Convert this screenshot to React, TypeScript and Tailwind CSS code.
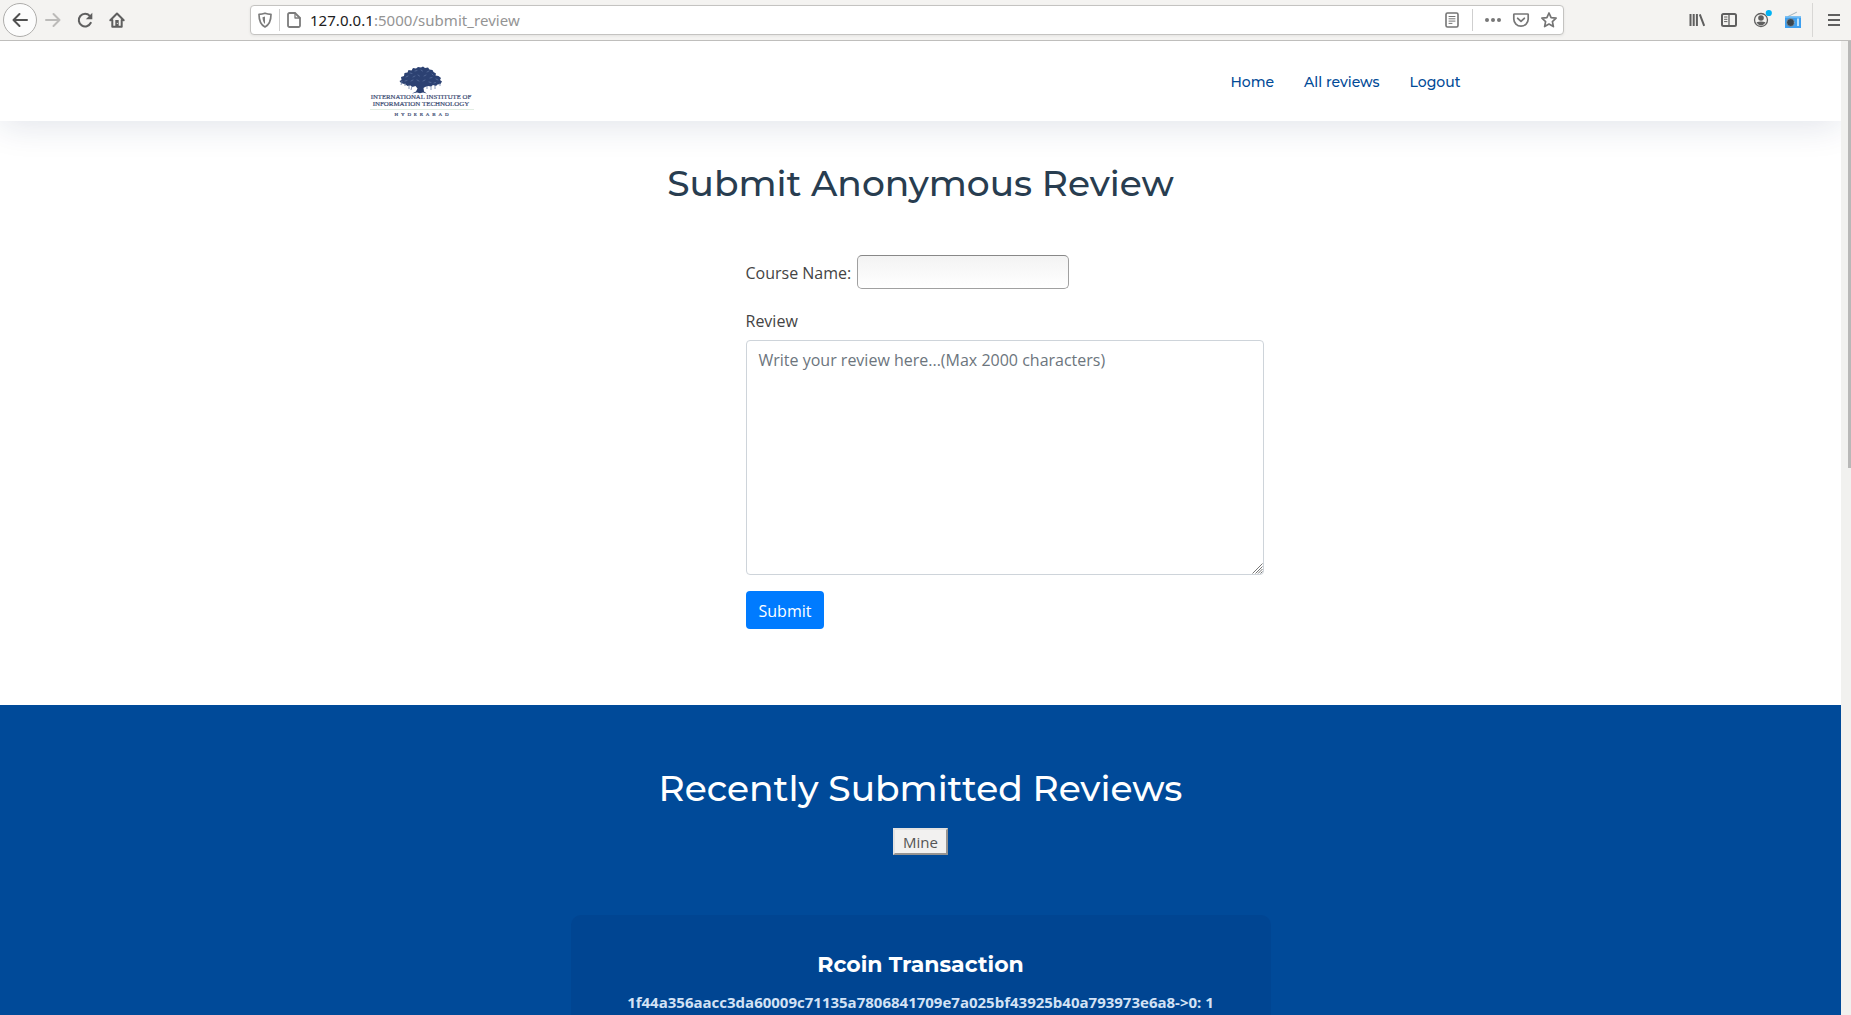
import React from "react";

type IconProps = { children: React.ReactNode; className?: string; color?: string };

function Icon({ children, className = "", color = "#5f5f5f" }: IconProps) {
  return (
    <svg viewBox="0 0 16 16" fill="none" stroke={color} strokeWidth="2" strokeLinecap="round" strokeLinejoin="round" className={`h-4 w-4 shrink-0 overflow-visible ${className}`}>
      {children}
    </svg>
  );
}

function Slot({ children }: { children: React.ReactNode }) {
  return <div className="flex h-8 w-8 shrink-0 items-center justify-center">{children}</div>;
}

function Toolbar() {
  return (
    <div className="flex h-[41px] shrink-0 items-center border-b border-[#bfbebc] bg-[#f4f3f1]">
      <div className="ml-[3px] flex h-[34px] w-[34px] shrink-0 items-center justify-center rounded-full border border-[#aeadab] bg-[#fcfcfc]">
        <Icon color="#505050"><path d="M15 8H1.5M7.5 2L1.5 8l6 6" /></Icon>
      </div>
      <Slot><Icon color="#bcbbb9"><path d="M1 8h13.5M8.5 2l6 6-6 6" /></Icon></Slot>
      <Slot>
        <Icon>
          <path d="M13.8 10.8A6.3 6.3 0 1 1 12.8 3.9" />
          <path d="M15.3 .8v6.5H8.8z" fill="#5f5f5f" stroke="none" />
        </Icon>
      </Slot>
      <Slot>
        <Icon>
          <path d="M1.3 8.3L8 1.5l6.7 6.8M3.3 8v6.7h9.4V8" />
          <path d="M6.3 8h3.4v7H6.3z" fill="#5f5f5f" stroke="none" />
          <path d="M8.3 11.3v.2" stroke="#f4f3f1" strokeWidth="1" />
        </Icon>
      </Slot>
      <div className="ml-[117px] flex h-[30px] w-[1314px] shrink-0 items-center rounded-[4px] border border-[#c4c3c1] bg-white shadow-[0_1px_3px_rgba(0,0,0,0.07)]">
        <Icon color="#7c7c7c" className="ml-[6px]">
          <path d="M8 1.2c2 .8 4 1.1 6 1.1 0 6-1.1 10.3-6 12.7C3.1 12.6 2 8.3 2 2.3c2 0 4-.3 6-1.1z" strokeWidth="1.7" />
          <path d="M8 4.5v7.5C6.2 10.4 5.6 8 5.5 5.2z" fill="#7c7c7c" stroke="none" />
        </Icon>
        <div className="ml-[6px] h-[22px] w-px bg-[#cfcfcf]" />
        <Icon color="#7c7c7c" className="ml-[6px]">
          <path d="M3.5 1H9l5 5v7.5a1.5 1.5 0 0 1-1.5 1.5h-9A1.5 1.5 0 0 1 2 13.5v-11A1.5 1.5 0 0 1 3.5 1z" strokeWidth="1.8" />
          <path d="M9 1v5h5" strokeWidth="1.3" />
        </Icon>
        <div className="ml-[8px] font-['Noto_Sans','Open_Sans',sans-serif] text-[15px] leading-5 tracking-[0.04px] text-[#949494]">
          <span className="text-[#202020]">127.0.0.1</span>:5000/submit_review
        </div>
        <div className="ml-auto flex items-center">
          <Icon color="#747474">
            <rect x="2" y="1" width="12" height="14" rx="1.5" strokeWidth="1.6" />
            <path d="M5 4.5h6M5 6.8h6M5 9.1h6M5 11.4h3" strokeWidth="1" />
          </Icon>
          <div className="ml-[12px] h-[22px] w-px bg-[#cfcfcf]" />
          <Icon color="#777" className="ml-[12px]">
            <g fill="#777" stroke="none"><circle cx="2" cy="8" r="2" /><circle cx="8" cy="8" r="2" /><circle cx="14" cy="8" r="2" /></g>
          </Icon>
          <Icon color="#777" className="ml-[12px]">
            <path d="M1.5 2h13a.7.7 0 0 1 .7.7V7A7.2 7.2 0 0 1 .8 7V2.7A.7.7 0 0 1 1.5 2z" strokeWidth="1.7" />
            <path d="M4.7 6.3L8 9.4l3.3-3.1" strokeWidth="1.8" />
          </Icon>
          <Icon color="#747474" className="ml-[12px] mr-[6px]">
            <path d="M8 1l2.1 4.6 5 .6-3.7 3.4 1 5L8 12.1l-4.4 2.5 1-5L.9 6.2l5-.6z" strokeWidth="1.7" />
          </Icon>
        </div>
      </div>
      <div className="ml-[117px] flex items-center">
        <Slot><Icon><path d="M1.5 2v12M4.7 2v12M7.9 2v12M10.8 2.3l4.4 11.5" strokeLinecap="butt" /></Icon></Slot>
        <Slot>
          <Icon>
            <rect x="1" y="2" width="14" height="12" rx="1.5" />
            <path d="M8 2v12" strokeWidth="1.3" />
            <path d="M3.5 5h2.5M3.5 7.3h2.5M3.5 9.6h2.5" strokeWidth="1" />
          </Icon>
        </Slot>
        <Slot>
          <Icon>
            <circle cx="8" cy="8" r="6.5" strokeWidth="1.3" />
            <circle cx="8" cy="6" r="2.8" fill="#5f5f5f" stroke="none" />
            <path d="M3.5 10.2Q8 8.6 12.5 10.2Q11 13.3 8 13.3T3.5 10.2z" fill="#5f5f5f" stroke="none" />
            <circle cx="15.8" cy="1" r="3.1" fill="#00b3f4" stroke="none" />
          </Icon>
        </Slot>
        <Slot>
          <Icon>
            <path d="M3 4.5L11.5 .3" stroke="#a3b4bd" strokeWidth="1" />
            <rect x="0" y="4.5" width="16" height="11.5" fill="#3d9ff0" stroke="none" />
            <path d="M0 4.5h16v1.5H0z" fill="#69b9f5" stroke="none" />
            <circle cx="5.5" cy="10.5" r="3.9" fill="#39454e" stroke="#89a9bd" strokeWidth=".7" />
            <path d="M13 6.5v7.5" stroke="#b9e2fb" strokeWidth="2" strokeLinecap="butt" />
          </Icon>
        </Slot>
        <div className="ml-[3px] h-[34px] w-px bg-[#d8d7d5]" />
        <div className="ml-[13px]"><Icon><path d="M2 3h12M2 8h12M2 13h12" strokeLinecap="butt" /></Icon></div>
      </div>
    </div>
  );
}

function Logo() {
  return (
    <svg viewBox="0 0 104 56" className="h-14 w-[104px]" role="img">
      <path
        d="M31 22l-1.5-2 2-1-.5-3 3-1 .5-3 3-.5 1-2.5 3 .5 1.5-2.5 3 .5 2-1.5 3 .5 2-1 2 1.5 3-.5 1.5 2 3 .5 1 2 2.5 1.5-.5 2 3 .5 2.5 2-1 2 2 1.5-1.5 2.5-3 .5-1.5 1.5-3-1-2 1.5-3-.5-3 1-1.5 1 .5 3.5 3 2-4-1-3 .8-3-.8-5 1 4-2 1.5-3-2-2.5-3 1-2-1.5-3 .5-2-1.5z"
        fill="#2c4172"
      />
      <path d="M32 20l-1 4M35 22v3M70 22v3M39 24v4M65 24v4M42 25l-1 4M61 25v4M57 25v3" stroke="#6a7da4" strokeWidth=".8" />
      <path d="M36 16l2-1M40 12l2 .5M45 10l2-.5M51 9l1.5 1M57 11l2-1M62 13l1 1M43 16l2-1M48 14l1.5 1M54 15l2-1M60 17l2-.5M66 18l2 1M35 20l2-.5M41 20l2-1M47 19l2 1M53 20l2-1M59 21l2 .5M64 22l1.5-.5" stroke="#5f74a0" strokeWidth=".7" strokeLinecap="round" />
      <g fill="#3a4a72" className="font-['Liberation_Serif',serif]" stroke="#3a4a72" strokeWidth=".2">
        <text x="0.7" y="38.3" fontSize="7" textLength="100.5" lengthAdjust="spacingAndGlyphs">INTERNATIONAL INSTITUTE OF</text>
        <text x="2.7" y="45.3" fontSize="7" textLength="96.5" lengthAdjust="spacingAndGlyphs">INFORMATION TECHNOLOGY</text>
        <text x="24.5" y="55.4" fontSize="5" textLength="54">HYDERABAD</text>
      </g>
      <path d="M0 48.5h104" stroke="#dbe8dc" strokeWidth=".8" />
    </svg>
  );
}

export default function App() {
  return (
    <div className="flex h-[1015px] w-[1851px] flex-col overflow-hidden bg-white font-['Open_Sans',sans-serif]">
      <Toolbar />
      <div className="flex min-h-0 flex-1">
        <div className="flex w-[1841px] shrink-0 flex-col overflow-hidden">
          <header className="flex h-20 shrink-0 items-start bg-white shadow-[0_3px_36px_rgba(20,40,90,0.14)]">
            <div className="ml-[370px] mt-[20px]"><Logo /></div>
            <nav className="ml-auto mr-[380.5px] mt-[30px] flex gap-[30px] font-['Montserrat',sans-serif] text-[14px] font-medium leading-[22px] text-[#014a97]">
              <a>Home</a>
              <a>All reviews</a>
              <a>Logout</a>
            </nav>
          </header>
          <main className="h-[584px] shrink-0">
            <h1 className="mt-[40px] text-center font-['Montserrat',sans-serif] text-[36px] font-medium leading-[44px] text-[#283d50]">Submit Anonymous Review</h1>
            <form className="ml-[746px] mt-[50px] w-[518px] text-base text-[#444]">
              <div className="flex h-[34px] items-center justify-between">
                <label className="-ml-[0.5px] pt-[2px]">Course Name:</label>
                <input className="mr-[195px] h-[34px] w-[212px] rounded-[5px] border border-[#a0a0a0] border-t-[#888] bg-linear-to-b from-[#f3f3f3] to-white" />
              </div>
              <label className="-ml-[0.5px] mt-[20px] block leading-6">Review</label>
              <div className="relative mt-[7px]">
                <textarea placeholder="Write your review here...(Max 2000 characters)" className="block h-[235px] w-full resize-none rounded-[4px] border border-[#ced4da] px-[11.5px] py-[7px] leading-6 placeholder:text-[#6c757d]" />
                <svg viewBox="0 0 11 11" className="absolute right-[1px] bottom-[1px] h-[11px] w-[11px]">
                  <path d="M.5 10.5l10-10M3.5 10.5l7-7M6 10.5L10.5 6M8.5 10.5l2-2" stroke="#777" strokeWidth="1" />
                </svg>
              </div>
              <button className="mt-4 h-[38px] w-[78px] rounded-[4px] bg-[#007bff] pt-[2px] text-white">Submit</button>
            </form>
          </main>
          <section className="flex min-h-0 flex-1 flex-col items-center bg-[#004a99]">
            <h2 className="mt-[61px] font-['Montserrat',sans-serif] text-[36px] font-medium leading-[44px] text-white">Recently Submitted Reviews</h2>
            <button className="mt-[18px] h-[27px] w-[55px] border-2 border-t-[#e3e2e1] border-r-[#969492] border-b-[#969492] border-l-[#e3e2e1] bg-[#f2f1f0] text-[15px] leading-[25px] text-[#555]">Mine</button>
            <article className="mt-[60px] flex h-[300px] w-[700px] shrink-0 flex-col items-center rounded-[10px] bg-[#004592]">
              <h3 className="mt-[35px] font-['Montserrat',sans-serif] text-[22px] font-bold leading-[30px] text-white">Rcoin Transaction</h3>
              <p className="mt-[10px] whitespace-nowrap text-[15px] font-bold leading-6 text-[#d3e2f5]">1f44a356aacc3da60009c71135a7806841709e7a025bf43925b40a793973e6a8-&gt;0: 1</p>
            </article>
          </section>
        </div>
        <div className="flex w-[10px] justify-end bg-[#f1f1ef]">
          <div className="h-[427px] w-[3px] bg-[#b8b8b7]" />
        </div>
      </div>
    </div>
  );
}
